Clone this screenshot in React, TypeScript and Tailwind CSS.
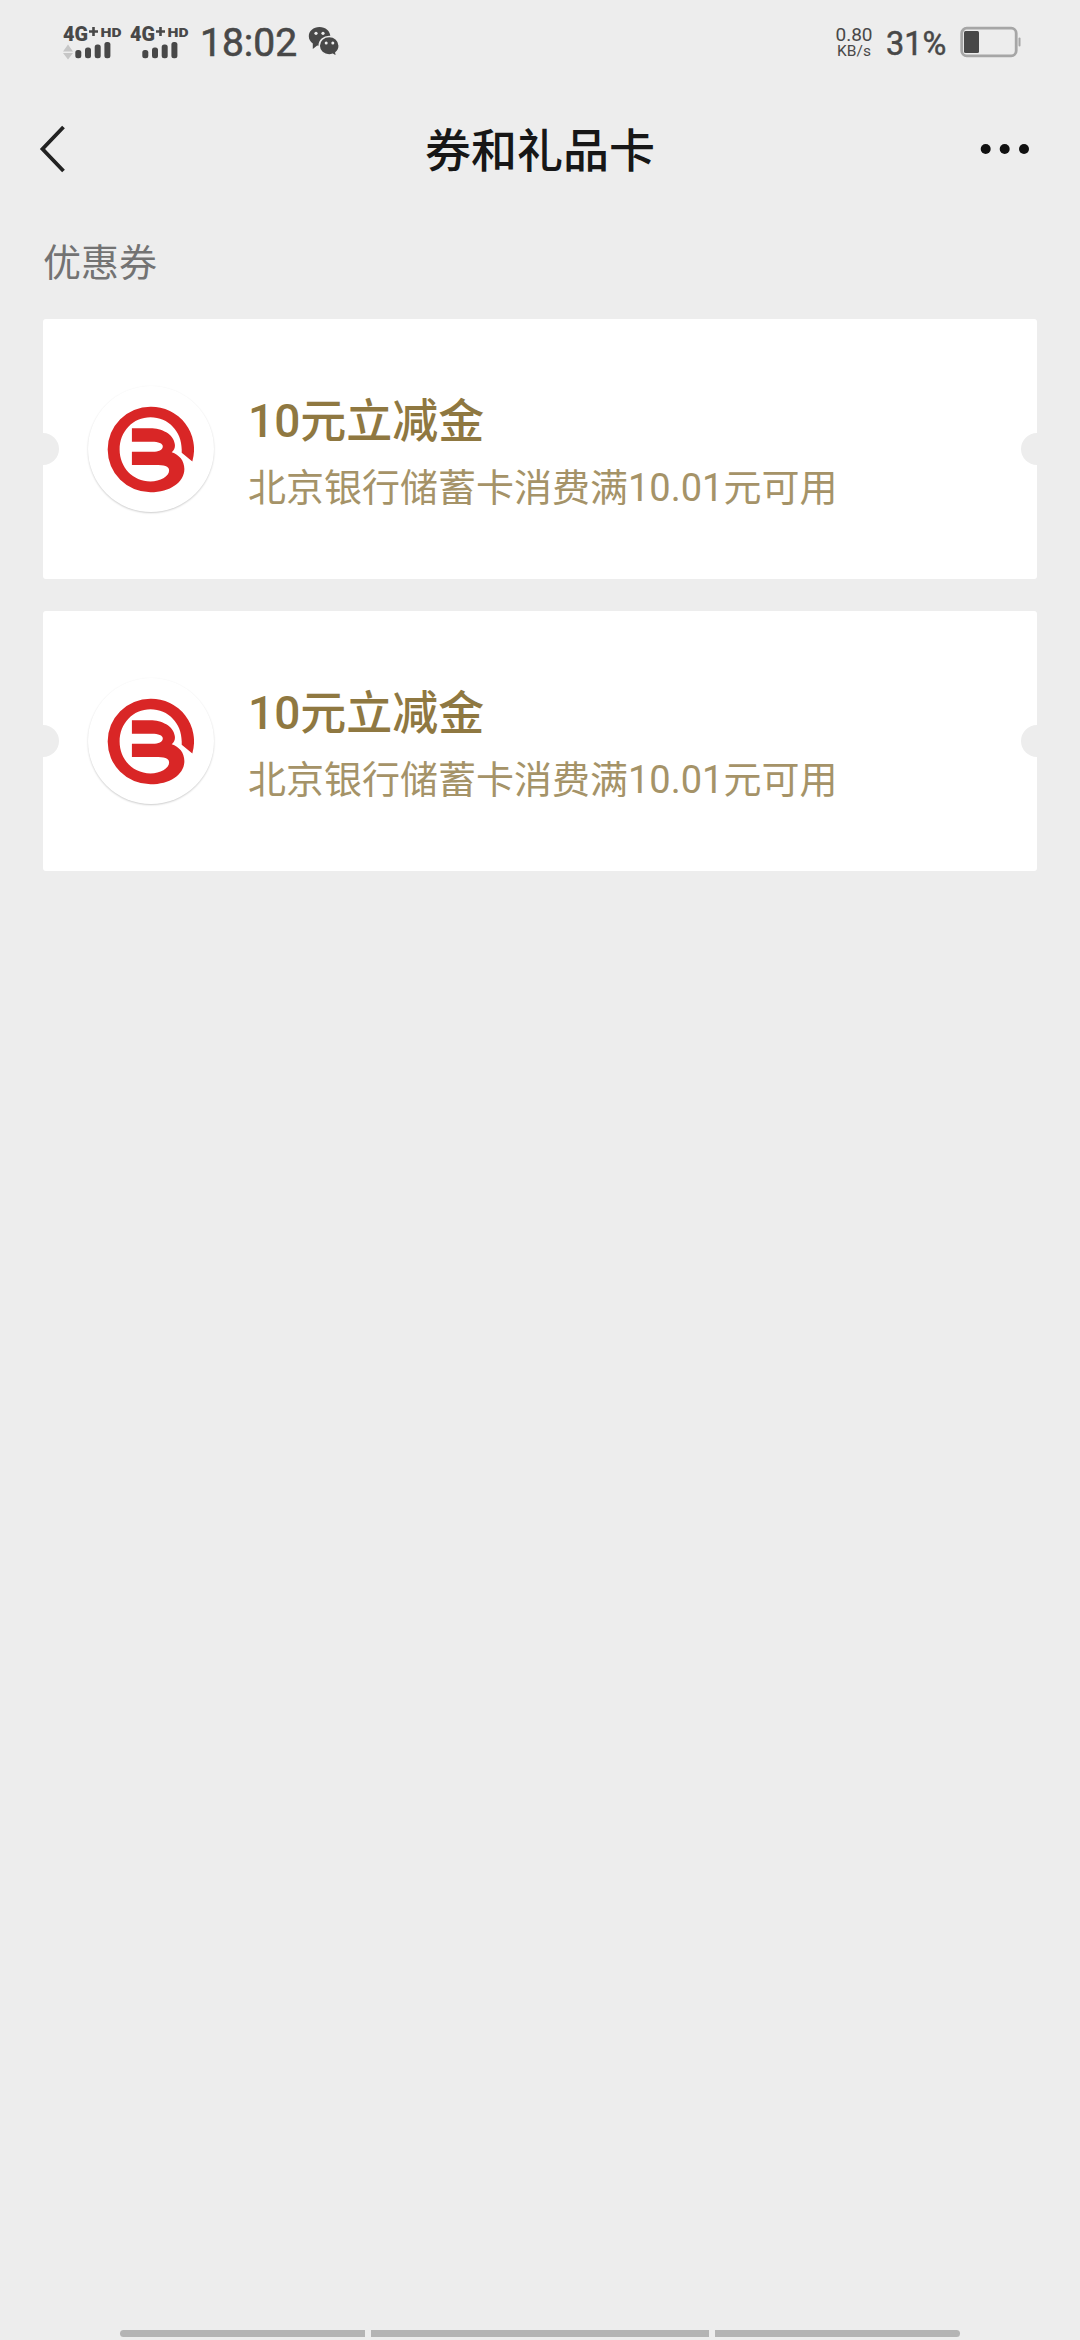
import React from "react";

const coupons = [
  { id: 1, title: "10元立减金", desc: "北京银行储蓄卡消费满10.01元可用" },
  { id: 2, title: "10元立减金", desc: "北京银行储蓄卡消费满10.01元可用" },
];

function Signal({ arrows = false }: { arrows?: boolean }) {
  return (
    <svg width="60" height="36" viewBox="0 0 60 36" fill="#484848" className="font-[Roboto,sans-serif] font-black">
      <text x="0" y="17" fontSize="19.5" textLength="25" lengthAdjust="spacingAndGlyphs">4G</text>
      <path d="M30.5 3v9M26 7.5h9" stroke="#484848" strokeWidth="2.6" />
      <text x="37.5" y="12.5" fontSize="13" textLength="21" lengthAdjust="spacingAndGlyphs">HD</text>
      {arrows && <path d="M5 20.5l5 7H0zM5 35.5l5-6.500H0z" fill="#c6c6c6" />}
      <rect x="12.3" y="26" width="6" height="8.3" rx="2.5" />
      <rect x="22" y="23.5" width="6" height="10.8" rx="2.5" />
      <rect x="31.7" y="20.5" width="6" height="13.8" rx="2.5" />
      <rect x="41.4" y="18" width="6" height="16.3" rx="2.5" />
    </svg>
  );
}

function WechatIcon() {
  return (
    <svg width="32" height="32" viewBox="0 0 32 32" fill="#484848">
      <path d="M11.5 1C5.4 1 .8 5 .8 10.2c0 3 1.5 5.5 4 7.2v5.600l4.400-3.500c1 .2 1.500.2 2.300.2C17.500 19.700 22.300 15.500 22.300 10.300S17.500 1 11.500 1z" />
      <path d="M21.2 10.500c-5.500 0-10 4-10 9.200s4.500 9.200 10 9.200c1.300 0 2.500-.2 3.600-.6l3.700 2.300-.6-4c2.200-1.700 3.300-4.200 3.300-6.900 0-5.200-4.500-9.200-10-9.200z" stroke="#ededed" strokeWidth="1.5" />
      <g fill="#ededed">
        <circle cx="8" cy="7.300" r="1.600" />
        <circle cx="15" cy="7.300" r="1.600" />
        <circle cx="18.200" cy="17" r="1.500" />
        <circle cx="24.800" cy="17" r="1.500" />
      </g>
    </svg>
  );
}

function BankLogo() {
  return (
    <svg width="87" height="87" viewBox="0 0 262 262" fill="#d92626">
      <path d="M257 167A129 129 0 0 0 131 2A129 129 0 0 0 131 260C190 260 233 230 233 190C233 163 217 147 195 139C203 132 206 124 204 114C200 84 165 67 130 67H75V108H135C155 108 168 113 168 122C168 132 155 138 138 138H75V178H145C172 178 187 181 187 194C187 212 160 227 131 227C78 227 38 185 38 131C38 77 78 34 131 34C185 34 225 77 225 131V141Z" />
    </svg>
  );
}

function StatusBar() {
  return (
    <div className="flex h-[84px] items-center justify-between pl-[63px] pr-[59px] text-[#484848]">
      <div className="flex items-center">
        <Signal arrows />
        <div className="ml-[7px]">
          <Signal />
        </div>
        <span className="ml-[10px] w-[99px] pt-0.5 text-[39px] leading-[82px] [-webkit-text-stroke:0.6px_#484848]">18:02</span>
        <div className="ml-[9px]">
          <WechatIcon />
        </div>
      </div>
      <div className="flex items-center">
        <div className="flex w-[38px] flex-col items-center">
          <span className="text-[19px] leading-[17px]">0.80</span>
          <span className="text-[15.5px] leading-[16px]">KB/s</span>
        </div>
        <span className="ml-[13px] w-[62px] pt-[3px] text-[32.5px] leading-10 [-webkit-text-stroke:0.5px_#484848]">31%</span>
        <svg width="61" height="32" viewBox="0 0 61 32" className="ml-[12px]">
          <rect x="1.7" y="2.2" width="54.5" height="27.6" rx="5" fill="none" stroke="#a6a6a6" strokeWidth="2.8" />
          <rect x="4" y="5" width="15" height="22" rx="1.5" fill="#484848" />
          <rect x="58.5" y="11.5" width="2" height="9" rx="1" fill="#a6a6a6" />
        </svg>
      </div>
    </div>
  );
}

function Coupon({ title, desc }: { title: string; desc: string }) {
  return (
    <div className="relative flex h-[260px] items-center overflow-hidden rounded-[3px] bg-white pl-[45px]">
      {/* Ticket notches */}
      <div className="absolute -left-4 top-[114px] size-8 rounded-full bg-[#ededed]"></div>
      <div className="absolute -right-4 top-[114px] size-8 rounded-full bg-[#ededed]"></div>

      <div className="flex size-[126px] shrink-0 items-center justify-center rounded-full pr-[2px] shadow-[0_1px_2px_rgba(0,0,0,0.2)]">
        <BankLogo />
      </div>
      <div className="ml-[34px] flex flex-col pt-[9px]">
        <span className="text-[46px] font-medium leading-[68px] text-[#8f7841]">{title}</span>
        <span className="text-[38px] leading-[66px] text-[#a59368]">{desc}</span>
      </div>
    </div>
  );
}

export default function App() {
  return (
    <div className="flex h-[2340px] w-[1080px] flex-col bg-[#ededed] font-[Roboto,'Noto_Sans_CJK_SC',sans-serif]">
      <StatusBar />

      {/* Title bar */}
      <header className="flex h-[130px] items-center justify-between px-[38px]">
        <svg width="62" height="50" viewBox="0 0 62 50" fill="none" stroke="#222" strokeWidth="3.8">
          <path d="M25.5 3L4.500 25l21 22" />
        </svg>
        <h1 className="pt-[5px] text-[46px] font-medium text-[#171717]">券和礼品卡</h1>
        <svg width="62" height="12" viewBox="0 0 62 12" fill="#111">
          <circle cx="5.700" cy="6" r="5" />
          <circle cx="24.700" cy="6" r="5" />
          <circle cx="44" cy="6" r="5" />
        </svg>
      </header>

      <main className="flex flex-1 flex-col px-[43px]">
        <h2 className="h-[105px] text-[38px] leading-[98px] text-[#737373]">优惠券</h2>
        <div className="flex flex-col gap-8">
          {coupons.map((c) => (
            <Coupon key={c.id} title={c.title} desc={c.desc} />
          ))}
        </div>
      </main>

      {/* Gesture navigation bar */}
      <div className="mx-[120px] mb-[3px] flex h-[7px] gap-[6px]">
        <div className="w-[245px] rounded-l-full bg-[#b4b4b4]"></div>
        <div className="flex-1 bg-[#b4b4b4]"></div>
        <div className="w-[245px] rounded-r-full bg-[#b4b4b4]"></div>
      </div>
    </div>
  );
}
